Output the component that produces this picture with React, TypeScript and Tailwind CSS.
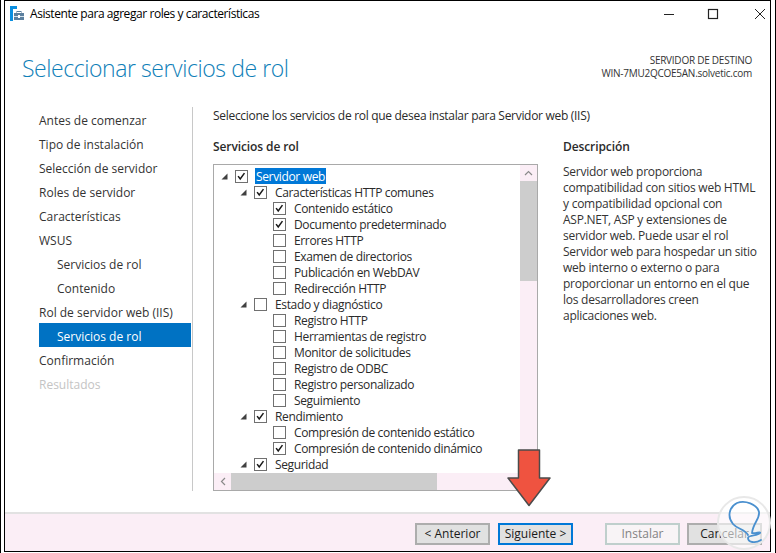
const FONT = "font-['Open_Sans','Liberation_Sans',sans-serif]";

const NAV = [
  { label: 'Antes de comenzar' },
  { label: 'Tipo de instalación' },
  { label: 'Selección de servidor' },
  { label: 'Roles de servidor' },
  { label: 'Características' },
  { label: 'WSUS' },
  { label: 'Servicios de rol', sub: true },
  { label: 'Contenido', sub: true },
  { label: 'Rol de servidor web (IIS)' },
  { label: 'Servicios de rol', sub: true, active: true },
  { label: 'Confirmación' },
  { label: 'Resultados', disabled: true },
];

type TreeRow = { label: string; level: number; checked?: boolean; arrow?: boolean; selected?: boolean };

const TREE: TreeRow[] = [
  { label: 'Servidor web', level: 0, checked: true, arrow: true, selected: true },
  { label: 'Características HTTP comunes', level: 1, checked: true, arrow: true },
  { label: 'Contenido estático', level: 2, checked: true },
  { label: 'Documento predeterminado', level: 2, checked: true },
  { label: 'Errores HTTP', level: 2 },
  { label: 'Examen de directorios', level: 2 },
  { label: 'Publicación en WebDAV', level: 2 },
  { label: 'Redirección HTTP', level: 2 },
  { label: 'Estado y diagnóstico', level: 1, arrow: true },
  { label: 'Registro HTTP', level: 2 },
  { label: 'Herramientas de registro', level: 2 },
  { label: 'Monitor de solicitudes', level: 2 },
  { label: 'Registro de ODBC', level: 2 },
  { label: 'Registro personalizado', level: 2 },
  { label: 'Seguimiento', level: 2 },
  { label: 'Rendimiento', level: 1, checked: true, arrow: true },
  { label: 'Compresión de contenido estático', level: 2 },
  { label: 'Compresión de contenido dinámico', level: 2, checked: true },
  { label: 'Seguridad', level: 1, checked: true, arrow: true },
];

const DESCRIPTION = [
  'Servidor web proporciona',
  'compatibilidad con sitios web HTML',
  'y compatibilidad opcional con',
  'ASP.NET, ASP y extensiones de',
  'servidor web. Puede usar el rol',
  'Servidor web para hospedar un sitio',
  'web interno o externo o para',
  'proporcionar un entorno en el que',
  'los desarrolladores creen',
  'aplicaciones web.',
];

function ServerIcon() {
  return (
    <svg width="15" height="15" viewBox="0 0 15 15" className="shrink-0">
      <rect x="0" y="0" width="7" height="3" fill="#0a8fe0" />
      <rect x="0" y="3" width="3" height="12" fill="#0a8fe0" />
      <rect x="4" y="7" width="10" height="7" fill="#5b7f9e" />
      <rect x="7" y="5.5" width="4" height="2" fill="none" stroke="#5b7f9e" />
      <rect x="4" y="10" width="10" height="1" fill="#d5e2ec" />
      <rect x="8" y="9" width="2" height="3" fill="#ffffff" />
    </svg>
  );
}

function Check() {
  return (
    <svg viewBox="0 0 13 13" className="w-full h-full">
      <path d="M2.5 6 L5 9.5 L10 2.5" fill="none" stroke="#1a1a1a" strokeWidth="1.8" />
    </svg>
  );
}

function Row({ row }: { row: TreeRow }) {
  return (
    <div className="h-4 flex items-center shrink-0">
      <div className="flex items-center" style={{ marginLeft: row.level * 19 }}>
        <div className="w-[7px] h-[7px] flex items-center">
          {row.arrow && (
            <svg width="7" height="7" viewBox="0 0 7 7">
              <path d="M6.5 0.5 V6.5 H0.5 Z" fill="#404040" />
            </svg>
          )}
        </div>
        <div className="w-[13px] h-[13px] ml-[7px] border border-[#707070] bg-white">
          {row.checked && <Check />}
        </div>
        <span
          className={
            row.selected
              ? 'ml-[7px] px-[1px] h-4 bg-[#0078d7] text-white leading-[18px] whitespace-nowrap'
              : 'ml-[7px] px-[1px] h-4 leading-[18px] whitespace-nowrap'
          }
        >
          {row.label}
        </span>
      </div>
    </div>
  );
}

function Btn({ children, variant }: { children: string; variant?: 'focus' | 'disabled' }) {
  let cls = 'border-[#adadad] bg-[#e1e1e1] text-[#1a1a1a]';
  if (variant === 'focus') cls = 'border-[#0078d7] bg-[#e1e1e1] text-[#1a1a1a]';
  if (variant === 'disabled') cls = 'border-[#bfcfcc] bg-[#f8f4f6] text-[#838383]';
  return (
    <div className={`w-[75px] h-[22px] border-2 pb-[1px] flex items-center justify-center text-xs ${cls}`}>
      {children}
    </div>
  );
}

export default function App() {
  return (
    <div className={`relative w-[776px] h-[553px] overflow-hidden bg-white border-l border-r border-black px-[3px] ${FONT}`}>
      <div className="w-[767px] h-[552px] border-l border-r border-t border-b border-black flex flex-col text-xs text-[#2a2a2a]">
        {/* Title bar */}
        <div className="h-[29px] flex items-center shrink-0 pl-[5px] pb-[4px] text-black">
          <ServerIcon />
          <span className="ml-[5px] flex-1 tracking-[-0.43px]">Asistente para agregar roles y características</span>
          <svg width="101" height="12" viewBox="0 0 101 12" className="mr-[5px] shrink-0 text-[#222]">
            <path d="M0 6.5 H10" stroke="currentColor" fill="none" />
            <rect x="44.5" y="1.5" width="9" height="9" stroke="currentColor" fill="none" strokeWidth="1.2" />
            <path d="M91 1 L101 11 M101 1 L91 11" stroke="currentColor" fill="none" />
          </svg>
        </div>

        {/* Header */}
        <div className="h-[77px] shrink-0 flex justify-between pl-[17px] pr-[18px]">
          <h1 className="mt-[22px] text-[23px] leading-8 font-light text-[#0f80b8] tracking-[-0.43px]">
            Seleccionar servicios de rol
          </h1>
          <div className="mt-[24px] text-right text-[10px] leading-[13px] text-[#333] tracking-[-0.25px]">
            <div>SERVIDOR DE DESTINO</div>
            <div>WIN-7MU2QCOE5AN.solvetic.com</div>
          </div>
        </div>

        {/* Body */}
        <div className="flex-1 flex min-h-0">
          <nav className="ml-[34px] w-[154px] h-[384px] border-r border-[#c8c8c8] shrink-0">
            {NAV.map((item, i) => {
              let color = 'text-[#333]';
              if (item.active) color = 'bg-[#0072c3] text-white';
              if (item.disabled) color = 'text-[#c4c4c4]';
              return (
                <div key={i} className={`h-6 mr-[1px] pt-[4px] flex items-center ${item.sub ? 'pl-[18px]' : ''} ${color}`}>
                  {item.label}
                </div>
              );
            })}
          </nav>

          <div className="pl-[20px] flex-1 min-w-0">
            <p className="pt-[1px] leading-4 tracking-[-0.3px]">Seleccione los servicios de rol que desea instalar para Servidor web (IIS)</p>
            <div className="flex mt-[15px]">
              <div className="w-[350px] shrink-0">
                <h2 className="font-semibold leading-4 tracking-[-0.1px]">Servicios de rol</h2>
                <div className="relative mt-[9px] w-[325px] h-[327px] border border-[#a9a9a9] bg-white overflow-hidden">
                  <div className="h-[309px] overflow-hidden pt-[3px] pl-[7px] tracking-[-0.35px] flex flex-col">
                    {TREE.map((row) => (
                      <Row key={row.label} row={row} />
                    ))}
                  </div>
                  {/* Vertical scrollbar */}
                  <div className="absolute right-0 top-0 bottom-[17px] w-[17px] bg-[#fbeef6] flex flex-col">
                    <div className="h-[16px] flex items-center justify-center">
                      <svg width="9" height="6" viewBox="0 0 9 6">
                        <path d="M1 5 L4.5 1.5 L8 5" fill="none" stroke="#8a8a8a" strokeWidth="1.2" />
                      </svg>
                    </div>
                    <div className="h-[100px] bg-[#cdcdcd]" />
                  </div>
                  {/* Horizontal scrollbar */}
                  <div className="absolute left-0 right-0 bottom-0 h-[17px] bg-[#fbeef6] flex items-center">
                    <div className="w-[17px] flex items-center justify-center">
                      <svg width="6" height="9" viewBox="0 0 6 9">
                        <path d="M5 1 L1.5 4.5 L5 8" fill="none" stroke="#8a8a8a" strokeWidth="1.2" />
                      </svg>
                    </div>
                    <div className="h-[17px] w-[206px] bg-[#cdcdcd]" />
                  </div>
                </div>
              </div>
              <div className="flex-1 min-w-0">
                <h2 className="font-semibold leading-4 tracking-[-0.1px]">Descripción</h2>
                <div className="mt-[9px] leading-4 whitespace-nowrap text-[#333] tracking-[-0.25px]">
                  {DESCRIPTION.map((line) => (
                    <div key={line}>{line}</div>
                  ))}
                </div>
              </div>
            </div>
          </div>
        </div>

        {/* Footer */}
        <div className="h-[39px] shrink-0 bg-[#fbeef6] border-t-2 border-[#e2e2e2] flex items-start justify-end pt-[9px] pr-[8px]">
          <Btn>{'< Anterior'}</Btn>
          <div className="ml-[8px]"><Btn variant="focus">{'Siguiente >'}</Btn></div>
          <div className="ml-[32px]"><Btn variant="disabled">Instalar</Btn></div>
          <div className="ml-[7px]"><Btn>Cancelar</Btn></div>
        </div>
      </div>

      {/* Red arrow annotation */}
      <svg width="46" height="60" viewBox="0 0 46 60" className="absolute left-[505px] top-[449px]">
        <path d="M12.5 1 H33.5 V29 H44 L23 56.5 L2 29 H12.5 Z" fill="#ef5340" stroke="#4b4b4b" strokeWidth="1.5" strokeLinejoin="round" />
      </svg>

      {/* Watermark */}
      <svg width="56" height="58" viewBox="0 0 56 58" className="absolute left-[716px] top-[495px]">
        <circle cx="27" cy="28" r="26" fill="#ffffff" fillOpacity="0.6" stroke="#e8e8e8" strokeWidth="2" />
        <path
          d="M31 40 C28 34 20 34 16 29 C10 22 12 12 20 8 C28 5 40 9 42 17 C43 24 36 28 35 38 C38 39 44 36 43 38 C41 41 31 40 31 43 C31 47 38 49 44 45"
          fill="none"
          stroke="#4a90cf"
          strokeWidth="1.8"
          strokeLinecap="round"
        />
      </svg>
    </div>
  );
}
